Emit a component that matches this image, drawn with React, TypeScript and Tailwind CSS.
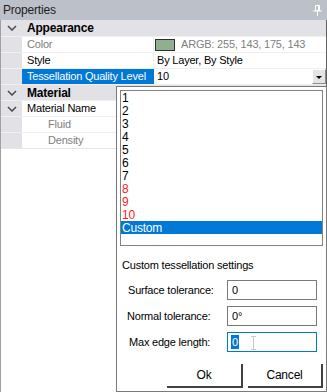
import React from 'react'

const Chevron = () => (
  <svg width="10" height="6" viewBox="0 0 10 6" className="block">
    <path d="M1 1 L5 5 L9 1" fill="none" stroke="#505050" strokeWidth="1.6" />
  </svg>
)

const Pin = () => (
  <svg width="9" height="11" viewBox="0 0 9 11" className="block">
    <path d="M2.5 0.5 H6.5 V5.5 H2.5 Z" fill="none" stroke="#fff" strokeWidth="1" />
    <path d="M5.5 1 V5" stroke="#fff" strokeWidth="1" />
    <path d="M0 6 H9" stroke="#fff" strokeWidth="1" />
    <path d="M4.5 6 V11" stroke="#fff" strokeWidth="1" />
  </svg>
)

const listItems = ['1', '2', '3', '4', '5', '6', '7', '8', '9', '10']

export default function App() {
  return (
    <div className="relative w-[327px] h-[392px] overflow-hidden bg-white text-[11px] leading-none tracking-[-0.2px] text-[#000] font-['Liberation_Sans',Arial,sans-serif]">
      {/* title bar */}
      <div className="flex items-center justify-between h-[20px] bg-[#bcc0c9] pl-[3px] pr-[5px]">
        <span className="text-[12px] text-[#1e1e1e]">Properties</span>
        <Pin />
      </div>

      {/* property grid */}
      <div className="flex flex-col border-l border-[#a0a0a0] border-r border-r-[#606060] h-[372px]">
        <div className="flex items-center h-[17px] bg-[#e1e1e6] border-b border-[#f0f0f0]">
          <div className="w-[21px] flex justify-center"><Chevron /></div>
          <span className="pl-[5px] font-bold text-[12px]">Appearance</span>
        </div>

        <div className="flex h-[16px] border-b border-[#f0f0f0]">
          <div className="w-[21px] bg-[#e1e1e6]" />
          <div className="w-[132px] flex items-center pl-[5px] text-[#808080] border-r border-[#f0f0f0]">Color</div>
          <div className="flex-1 flex items-center pl-[1px] text-[#808080]">
            <span className="w-[20px] h-[12px] bg-[#8faf8f] border border-[#303030] mr-[6px]" />
            ARGB: 255, 143, 175, 143
          </div>
        </div>

        <div className="flex h-[16px] border-b border-[#f0f0f0]">
          <div className="w-[21px] bg-[#e1e1e6]" />
          <div className="w-[132px] flex items-center pl-[5px] border-r border-[#f0f0f0]">Style</div>
          <div className="flex-1 flex items-center pl-[3px]">By Layer, By Style</div>
        </div>

        <div className="flex h-[16px] border-b border-[#f0f0f0]">
          <div className="w-[21px] bg-[#e1e1e6]" />
          <div className="w-[132px] flex items-center pl-[5px] bg-[#0078d7] text-white">Tessellation Quality Level</div>
          <div className="flex-1 flex items-center justify-between pl-[3px]">
            <span>10</span>
            <div className="w-[14px] h-[15px] bg-[#e5e5e5] border-t border-l border-t-white border-l-white border-r border-b border-r-[#8a8a8a] border-b-[#8a8a8a] flex items-center justify-center">
              <svg width="6" height="4" viewBox="0 0 6 4"><path d="M0 1 H6 L3 4 Z" fill="#000" /></svg>
            </div>
          </div>
        </div>

        <div className="flex items-center h-[16px] bg-[#e1e1e6] border-b border-[#f0f0f0]">
          <div className="w-[21px] flex justify-center"><Chevron /></div>
          <span className="pl-[5px] font-bold text-[12px]">Material</span>
        </div>

        <div className="flex h-[16px] border-b border-[#f0f0f0]">
          <div className="w-[21px] bg-[#e1e1e6] flex items-center justify-center"><Chevron /></div>
          <div className="flex-1 flex items-center pl-[5px]">Material Name</div>
        </div>

        <div className="flex h-[16px] border-b border-[#f0f0f0]">
          <div className="w-[21px] bg-[#e1e1e6]" />
          <div className="flex-1 flex items-center pl-[26px] text-[#808080]">Fluid</div>
        </div>

        <div className="flex h-[16px] border-b border-[#e6e6e6]">
          <div className="w-[21px] bg-[#e1e1e6]" />
          <div className="flex-1 flex items-center pl-[26px] text-[#808080]">Density</div>
        </div>
      </div>

      {/* dropdown popup */}
      <div className="absolute left-[116px] top-[86px] w-[211px] h-[306px] bg-white border border-[#7a7a7a] p-[3px] flex flex-col">
        <div className="h-[158px] border border-[#828282] flex flex-col">
          {listItems.map((item, i) => (
            <div key={item} className={`h-[13px] flex items-center pl-[1px] text-[12px] ${i >= 7 ? 'text-[#ff1a1a]' : ''}`}>{item}</div>
          ))}
          <div className="h-[13px] flex items-center pl-[1px] text-[12px] bg-[#0078d7] text-white">Custom</div>
        </div>

        <div className="mt-[14px] pl-[2px]">Custom tessellation settings</div>

        <div className="flex flex-col gap-[6px] mt-[9px] pr-[6px]">
          <div className="flex items-center justify-between h-[20px]">
            <span className="pl-[8px]">Surface tolerance:</span>
            <div className="w-[90px] h-[20px] border border-[#7a7a7a] flex items-center pl-[4px]">0</div>
          </div>
          <div className="flex items-center justify-between h-[20px]">
            <span className="pl-[7px]">Normal tolerance:</span>
            <div className="w-[90px] h-[20px] border border-[#7a7a7a] flex items-center pl-[4px]">0°</div>
          </div>
          <div className="flex items-center justify-between h-[20px]">
            <span className="pl-[9px]">Max edge length:</span>
            <div className="relative w-[90px] h-[20px] border border-[#0078d7] flex items-center pl-[3px]">
              <span className="bg-[#0078d7] text-white px-[1px] h-[14px] flex items-center">0</span>
              <svg className="absolute left-[23px] top-[3px]" width="5" height="14" viewBox="0 0 5 14">
                <path d="M0 0.5 H5 M2.5 0.5 V13.5 M0 13.5 H5" stroke="#c8c8c8" strokeWidth="1" fill="none" />
              </svg>
            </div>
          </div>
        </div>

        <div className="flex justify-end gap-[5px] mt-[12px]">
          <button className="w-[76px] h-[24px] bg-white border-r-2 border-b-2 border-[#404040] text-[12px]">Ok</button>
          <button className="w-[75px] h-[24px] bg-white border-r-2 border-b-2 border-[#404040] text-[12px]">Cancel</button>
        </div>
      </div>
    </div>
  )
}
